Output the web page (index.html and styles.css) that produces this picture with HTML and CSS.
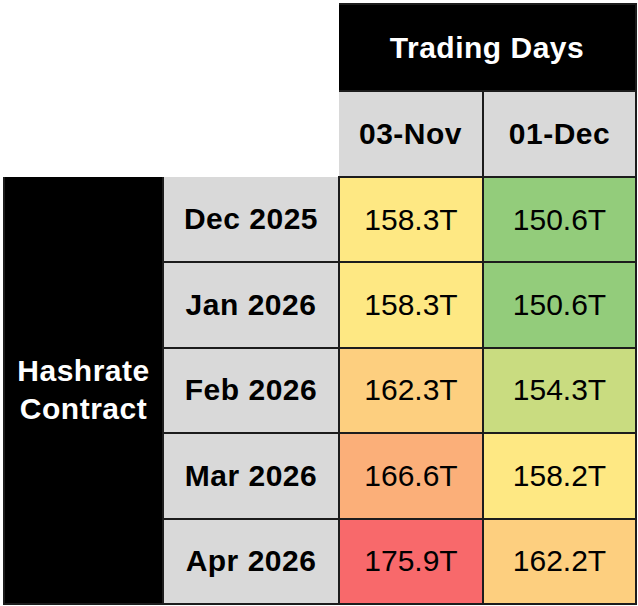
FILE: index.html
```html
<!DOCTYPE html>
<html>
<head>
<meta charset="utf-8">
<link rel="stylesheet" href="styles.css">
</head>
<body>
<table class="grid">
  <colgroup>
    <col class="c0"><col class="c1"><col class="c2"><col class="c3">
  </colgroup>
  <tr class="r-h1">
    <td class="blank" colspan="2" rowspan="2"></td>
    <th class="title" colspan="2">Trading Days</th>
  </tr>
  <tr class="r-h2">
    <th class="sub">03-Nov</th>
    <th class="sub">01-Dec</th>
  </tr>
  <tr class="r-d">
    <th class="side" rowspan="5">Hashrate<br>Contract</th>
    <th class="label">Dec 2025</th>
    <td class="v y1">158.3T</td>
    <td class="v g1">150.6T</td>
  </tr>
  <tr class="r-d">
    <th class="label">Jan 2026</th>
    <td class="v y1">158.3T</td>
    <td class="v g1">150.6T</td>
  </tr>
  <tr class="r-d">
    <th class="label">Feb 2026</th>
    <td class="v o1">162.3T</td>
    <td class="v g2">154.3T</td>
  </tr>
  <tr class="r-d">
    <th class="label">Mar 2026</th>
    <td class="v o2">166.6T</td>
    <td class="v y1">158.2T</td>
  </tr>
  <tr class="r-d">
    <th class="label">Apr 2026</th>
    <td class="v r1">175.9T</td>
    <td class="v o1">162.2T</td>
  </tr>
</table>
</body>
</html>
```
FILE: styles.css
```css
html, body {
  margin: 0;
  padding: 0;
  background: #ffffff;
}
body {
  padding: 3px;
  font-family: "Liberation Sans", Arial, sans-serif;
}
.grid {
  border-collapse: collapse;
  table-layout: fixed;
  width: 632px;
}
.c0 { width: 159px; }
.c1 { width: 176px; }
.c2 { width: 144px; }
.c3 { width: 153px; }

.grid th, .grid td {
  border: 2px solid #1c1c1c;
  padding: 0;
  text-align: center;
  vertical-align: middle;
  font-size: 30px;
  color: #000;
}
.grid .blank {
  border-style: hidden;
  background: #fff;
}
.r-h1 { height: 87px; }
.r-h2 { height: 86px; }
.r-d { height: 85.4px; }

.title {
  background: #000;
  color: #fff !important;
  font-weight: bold;
  letter-spacing: 0.5px;
}
.sub {
  background: #d9d9d9;
  font-weight: bold;
  letter-spacing: 0.5px;
}
.side {
  background: #000;
  color: #fff !important;
  font-weight: bold;
  line-height: 38px;
  letter-spacing: 0.5px;
}
.label {
  background: #d9d9d9;
  font-weight: bold;
  letter-spacing: 0.5px;
}
.v { font-weight: normal; }
.y1 { background: #fee883; }
.g1 { background: #93cc7b; }
.g2 { background: #c9dc80; }
.o1 { background: #fdcf7f; }
.o2 { background: #fbaf79; }
.r1 { background: #f8696b; }
```
